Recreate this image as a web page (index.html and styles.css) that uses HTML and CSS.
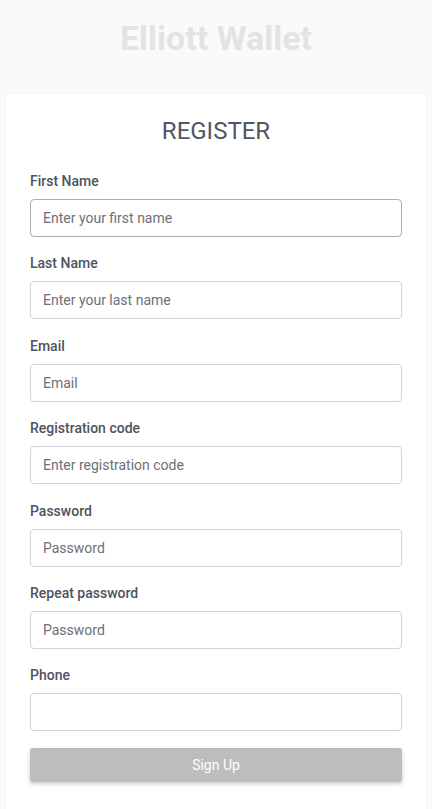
FILE: index.html
```html
<!DOCTYPE html>
<html lang="en">
<head>
  <meta charset="UTF-8" />
  <title>Elliott Wallet - Register</title>
  <link rel="stylesheet" href="styles.css">
</head>
<body>

  <h1 class="brand">Elliott Wallet</h1>

  <div class="card">
    <h2 class="card-title">REGISTER</h2>

    <form class="register-form">
      <div class="field">
        <label>First Name</label>
        <input type="text" class="focused" placeholder="Enter your first name" autofocus />
      </div>
      <div class="field">
        <label>Last Name</label>
        <input type="text" placeholder="Enter your last name" />
      </div>
      <div class="field">
        <label>Email</label>
        <input type="email" placeholder="Email" />
      </div>
      <div class="field">
        <label>Registration code</label>
        <input type="text" placeholder="Enter registration code" />
      </div>
      <div class="field">
        <label>Password</label>
        <input type="password" placeholder="Password" />
      </div>
      <div class="field">
        <label>Repeat password</label>
        <input type="password" placeholder="Password" />
      </div>
      <div class="field">
        <label>Phone</label>
        <input type="tel" />
      </div>

      <button type="button" class="btn-signup" disabled>Sign Up</button>
    </form>
  </div>

</body>
</html>
```

FILE: styles.css
```css
/* Police Roboto */
body {
  font-family: Roboto, "Liberation Sans", Arial, sans-serif;
  background-color: #fafafa;
  color: #4a4f57;
  margin: 0;
  padding: 0 6px;
}

.brand {
  text-align: center;
  font-size: 34px;
  font-weight: 700;
  color: #e3e3e3;
  margin: 0;
  padding-top: 18px;
  height: 77px;
  box-sizing: border-box;
}

/* Carte du formulaire */
.card {
  background-color: #ffffff;
  border-radius: 4px;
  box-shadow: 0 0 4px rgba(0, 0, 0, 0.05);
  padding: 0 24px 40px;
  margin-top: 17px;
}

.card-title {
  text-align: center;
  font-size: 24px;
  font-weight: 400;
  color: #505663;
  margin: 0;
  padding-top: 23px;
  height: 77px;
  box-sizing: border-box;
}

.register-form {
  display: flex;
  flex-direction: column;
}

.field {
  display: flex;
  flex-direction: column;
  margin-bottom: 16.4px;
}

.field label {
  font-size: 14px;
  font-weight: 500;
  color: #4d5360;
  margin-bottom: 7px;
  line-height: 21px;
}

/* Champs */
input[type="text"],
input[type="email"],
input[type="password"],
input[type="tel"] {
  height: 38px;
  box-sizing: border-box;
  width: 100%;
  padding: 6px 12px;
  border: 1px solid #ced4da;
  border-radius: 4px;
  font-family: inherit;
  font-size: 14px;
  color: #495057;
  background-color: #ffffff;
}
input::placeholder {
  color: #6c7077;
}
input.focused,
input:focus {
  outline: none;
  border-color: #aab0b6;
}

/* Bouton inscription */
.btn-signup {
  height: 34px;
  border: none;
  border-radius: 3px;
  background-color: #bdbdbd;
  color: #ffffff;
  font-family: inherit;
  font-size: 14px;
  box-shadow: 0 2px 4px rgba(0, 0, 0, 0.2);
}
```
